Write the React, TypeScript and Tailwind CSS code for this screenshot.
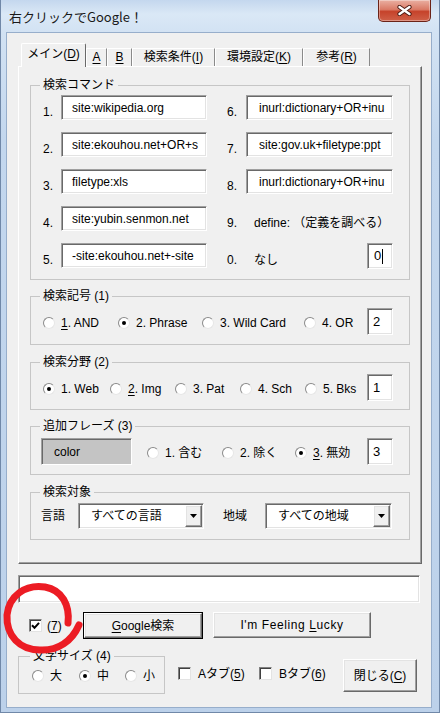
import React from "react";

type Kids = { children?: React.ReactNode };

const sunken =
  "bg-white border border-t-[#a0a0a0] border-l-[#a0a0a0] border-r-white border-b-white shadow-[inset_1px_1px_0_#696969,inset_-1px_-1px_0_#e3e3e3]";
const raised =
  "bg-[#f0f0f0] border border-t-white border-l-white border-r-[#696969] border-b-[#696969] shadow-[inset_-1px_-1px_0_#a0a0a0,inset_1px_1px_0_#e3e3e3]";

const U = ({ children }: Kids) => (
  <span className="underline underline-offset-[2px]">{children}</span>
);

const Radio = ({ checked = false }: { checked?: boolean }) => (
  <span className="flex items-center justify-center w-[12px] h-[12px] shrink-0 rounded-full bg-white border border-t-[#8a8a8a] border-l-[#8a8a8a] border-r-[#e6e6e6] border-b-[#e6e6e6]">
    {checked && <span className="w-[4px] h-[4px] rounded-full bg-black" />}
  </span>
);

const Check = ({ checked = false }: { checked?: boolean }) => (
  <span className="flex items-center justify-center w-[13px] h-[13px] shrink-0 bg-white border border-t-[#808080] border-l-[#808080] border-r-[#e3e3e3] border-b-[#e3e3e3] shadow-[inset_1px_1px_0_#404040]">
    {checked && (
      <svg width="9" height="9" viewBox="0 0 9 9">
        <path d="M1 4.2 L3.5 6.8 L8 1.8" stroke="#000" strokeWidth="2" fill="none" />
      </svg>
    )}
  </span>
);

const RadioItem = ({
  w,
  checked,
  children,
}: Kids & { w: string; checked?: boolean }) => (
  <div className={`flex items-center mt-[2px] ${w}`}>
    <Radio checked={checked} />
    <span className="ml-[6px] whitespace-nowrap">{children}</span>
  </div>
);

const Group = ({
  title,
  className = "",
  legend = "ml-[9px]",
  children,
}: Kids & { title: string; className?: string; legend?: string }) => (
  <fieldset className={`border border-[#c6c6c6] ${className}`}>
    <legend className={`px-[3px] text-[12px] leading-[16px] ${legend}`}>{title}</legend>
    {children}
  </fieldset>
);

const Field = ({ className = "", children }: Kids & { className?: string }) => (
  <div className={`${sunken} flex items-center overflow-hidden whitespace-nowrap ${className}`}>
    {children}
  </div>
);

const Combo = ({ text, w }: { text: string; w: string }) => (
  <div className={`${sunken} ${w} h-[26px] flex p-[1px]`}>
    <div className="flex-1 flex items-center pl-[11px]">{text}</div>
    <div className={`${raised} w-[17px] flex items-center justify-center`}>
      <svg width="7" height="4" viewBox="0 0 7 4">
        <path d="M0 0 H7 L3.5 4 Z" fill="#000" />
      </svg>
    </div>
  </div>
);

const commands = [
  ["1.", "site:wikipedia.org", "6.", "inurl:dictionary+OR+inu"],
  ["2.", "site:ekouhou.net+OR+s", "7.", "site:gov.uk+filetype:ppt"],
  ["3.", "filetype:xls", "8.", "inurl:dictionary+OR+inu"],
  ["4.", "site:yubin.senmon.net", "9.", ""],
  ["5.", "-site:ekouhou.net+-site", "0.", ""],
];

const tabs = [
  { label: <>メイン(<U>D</U>)</>, w: "w-[65px]", active: true },
  { label: <U>A</U>, w: "w-[21px]" },
  { label: <U>B</U>, w: "w-[25px]" },
  { label: <>検索条件(<U>I</U>)</>, w: "w-[83px]" },
  { label: <>環境設定(<U>K</U>)</>, w: "w-[88px]" },
  { label: <>参考(<U>R</U>)</>, w: "w-[67px]" },
];

export default function App() {
  return (
    <div className="relative w-[440px] h-[713px] overflow-hidden bg-[linear-gradient(to_bottom,#c4d7ee_0px,#dae8f6_14px,#d2e2f3_33px,#c3d7ee_140px,#bcd1ea_713px)] shadow-[inset_1px_0_0_#7088a8,inset_-1px_0_0_#7088a8,inset_0_-1px_0_#7088a8] font-['Liberation_Sans','Noto_Sans_CJK_JP',sans-serif] text-[12px] leading-[16px] text-black">
      {/* title bar */}
      <div className="flex h-[33px]">
        <div className="pl-[9px] pt-[8px] text-[13px] leading-[18px] font-['Noto_Sans_CJK_JP',sans-serif] text-[#1a1a1a]">
          右クリックでGoogle！
        </div>
        <div className="ml-auto mr-[9px] w-[53px] h-[22px] rounded-b-[5px] border border-t-0 border-[#6b2318] bg-[linear-gradient(to_bottom,#eab0a2,#da7a66_45%,#c6432b_55%,#cf6048)] shadow-[inset_0_0_0_1px_rgba(255,255,255,0.35)] flex items-center justify-center">
          <svg width="15" height="11" viewBox="0 0 15 11">
            <path d="M2.5 2 L12.5 9 M12.5 2 L2.5 9" stroke="#4a1a12" strokeWidth="4.2" strokeLinecap="round" />
            <path d="M2.5 2 L12.5 9 M12.5 2 L2.5 9" stroke="#fff" strokeWidth="2.4" strokeLinecap="round" />
          </svg>
        </div>
      </div>

      {/* client area */}
      <div className="ml-[7px] w-[424px] h-[674px] bg-[#f0f0f0] shadow-[0_0_0_1px_#97aecb] flex flex-col">
        {/* tabs */}
        <div className="flex ml-[14px] mt-[10px] h-[23px]">
          {tabs.map((t, i) =>
            t.active ? (
              <div
                key={i}
                className={`relative z-10 h-[24px] pt-[2px] text-center bg-[#f0f0f0] border-l border-t border-r border-l-white border-t-white border-r-[#696969] rounded-t-[2px] ${t.w}`}
              >
                {t.label}
              </div>
            ) : (
              <div
                key={i}
                className={`mt-[5px] h-[18px] text-center border-l border-t border-r border-l-white border-t-white border-r-[#8a8a8a] ${t.w}`}
              >
                {t.label}
              </div>
            ),
          )}
        </div>

        {/* tab panel */}
        <div className="ml-[11px] w-[404px] h-[498px] border border-t-white border-l-white border-r-[#696969] border-b-[#696969] shadow-[inset_-1px_-1px_0_#a0a0a0] pt-[10px] pl-[11px]">
          <Group title="検索コマンド" className="w-[380px]">
            <div className="flex flex-col gap-[12px] pt-[2px] pb-[11px] pl-[12px]">
              {commands.map(([n1, v1, n2, v2]) => (
                <div key={n1} className="flex h-[25px]">
                  <span className="w-[18px] self-end">{n1}</span>
                  <Field className="w-[146px] h-[25px] pl-[10px]">{v1}</Field>
                  <div className="flex ml-[20px] w-[166px]">
                    {n2 === "9." ? (
                      <>
                        <span className="w-[27px] self-end">{n2}</span>
                        <span className="self-end whitespace-nowrap">define: （定義を調べる）</span>
                      </>
                    ) : n2 === "0." ? (
                      <>
                        <span className="w-[27px] self-end">{n2}</span>
                        <span className="self-end flex-1">なし</span>
                        <Field className="w-[26px] h-[26px] pl-[6px] text-[13px]">
                          0<span className="ml-[1px] w-px h-[15px] bg-black" />
                        </Field>
                      </>
                    ) : (
                      <>
                        <span className="w-[19px] self-end">{n2}</span>
                        <Field className="w-[147px] h-[25px] pl-[12px]">{v2}</Field>
                      </>
                    )}
                  </div>
                </div>
              ))}
            </div>
          </Group>

          <Group title="検索記号 (1)" className="w-[380px] mt-[8px]">
            <div className="flex items-center pt-[4px] pb-[9px] pl-[12px]">
              <RadioItem w="w-[75px]">
                <U>1</U>. AND
              </RadioItem>
              <RadioItem w="w-[84px]" checked>
                2. Phrase
              </RadioItem>
              <RadioItem w="w-[102px]">3. Wild Card</RadioItem>
              <RadioItem w="w-[63px]">4. OR</RadioItem>
              <Field className="w-[26px] h-[27px] pl-[5px] text-[13px]">2</Field>
            </div>
          </Group>

          <Group title="検索分野 (2)" className="w-[380px] mt-[9px]">
            <div className="flex items-center pt-[4px] pb-[8px] pl-[12px]">
              <RadioItem w="w-[67px]" checked>
                1. Web
              </RadioItem>
              <RadioItem w="w-[65px]">
                <U>2</U>. Img
              </RadioItem>
              <RadioItem w="w-[65px]">3. Pat</RadioItem>
              <RadioItem w="w-[65px]">4. Sch</RadioItem>
              <RadioItem w="w-[62px]">5. Bks</RadioItem>
              <Field className="w-[26px] h-[27px] pl-[5px] text-[13px]">1</Field>
            </div>
          </Group>

          <Group title="追加フレーズ (3)" className="w-[380px] mt-[8px]">
            <div className="flex items-center pt-[4px] pb-[9px] pl-[10px]">
              <div className="w-[91px] h-[27px] flex items-center pl-[12px] bg-[#c4c4c4] border border-t-[#a0a0a0] border-l-[#a0a0a0] border-r-white border-b-white shadow-[inset_1px_1px_0_#696969]">
                color
              </div>
              <div className="w-[15px]" />
              <RadioItem w="w-[75px]">1. 含む</RadioItem>
              <RadioItem w="w-[73px]">2. 除く</RadioItem>
              <RadioItem w="w-[72px]" checked>
                <U>3</U>. 無効
              </RadioItem>
              <Field className="w-[26px] h-[27px] pl-[5px] text-[13px]">3</Field>
            </div>
          </Group>

          <Group title="検索対象" className="w-[380px] mt-[9px]">
            <div className="flex items-center pt-[3px] pb-[10px] pl-[10px]">
              <span className="w-[24px]">言語</span>
              <div className="ml-[13px]">
                <Combo text="すべての言語" w="w-[126px]" />
              </div>
              <span className="ml-[19px] w-[24px]">地域</span>
              <div className="ml-[18px]">
                <Combo text="すべての地域" w="w-[127px]" />
              </div>
            </div>
          </Group>
        </div>

        {/* query box */}
        <div className={`${sunken} ml-[11px] mt-[11px] w-[402px] h-[28px]`} />

        {/* search buttons */}
        <div className="flex items-center ml-[22px] mt-[9px] h-[27px]">
          <div className="flex items-center w-[54px]">
            <Check checked />
            <span className="ml-[5px]">
              (<U>7</U>)
            </span>
          </div>
          <div className="w-[120px] h-[27px] border border-black">
            <div className={`${raised} h-full flex items-center justify-center`}>
              <span>
                <U>G</U>oogle検索
              </span>
            </div>
          </div>
          <div
            className={`${raised} ml-[10px] w-[158px] h-[26px] self-start flex items-center justify-center tracking-[0.6px]`}
          >
            <span>
              I'm Feeling <U>L</U>ucky
            </span>
          </div>
        </div>

        {/* bottom row */}
        <div className="flex items-start ml-[11px] mt-[9px]">
          <Group title="文字サイズ (4)" className="w-[147px]" legend="ml-[11px]">
            <div className="flex items-center h-[16px] mt-[3px] mb-[10px] pl-[13px]">
              <RadioItem w="w-[47px]">大</RadioItem>
              <RadioItem w="w-[46px]" checked>
                中
              </RadioItem>
              <RadioItem w="w-[30px]">小</RadioItem>
            </div>
          </Group>
          <div className="flex items-center ml-[13px] mt-[19px] h-[13px] w-[81px]">
            <Check />
            <span className="ml-[7px] whitespace-nowrap">
              Aタブ(<U>5</U>)
            </span>
          </div>
          <div className="flex items-center mt-[19px] h-[13px] w-[84px]">
            <Check />
            <span className="ml-[7px] whitespace-nowrap">
              Bタブ(<U>6</U>)
            </span>
          </div>
          <div className={`${raised} mt-[11px] w-[74px] h-[33px] flex items-center justify-center`}>
            <span>
              閉じる(<U>C</U>)
            </span>
          </div>
        </div>
      </div>

      {/* red hand-drawn mark */}
      <svg
        className="absolute left-0 top-[578px] pointer-events-none"
        width="90"
        height="80"
        viewBox="0 578 90 80"
      >
        <path
          d="M68 623 C70 605, 62 590, 45 587 C25 584, 9 596, 7 615 C6 636, 20 650, 40 650 C58 651, 72 641, 79 625"
          stroke="#ec1c24"
          strokeWidth="7"
          strokeLinecap="round"
          fill="none"
        />
      </svg>
    </div>
  );
}
